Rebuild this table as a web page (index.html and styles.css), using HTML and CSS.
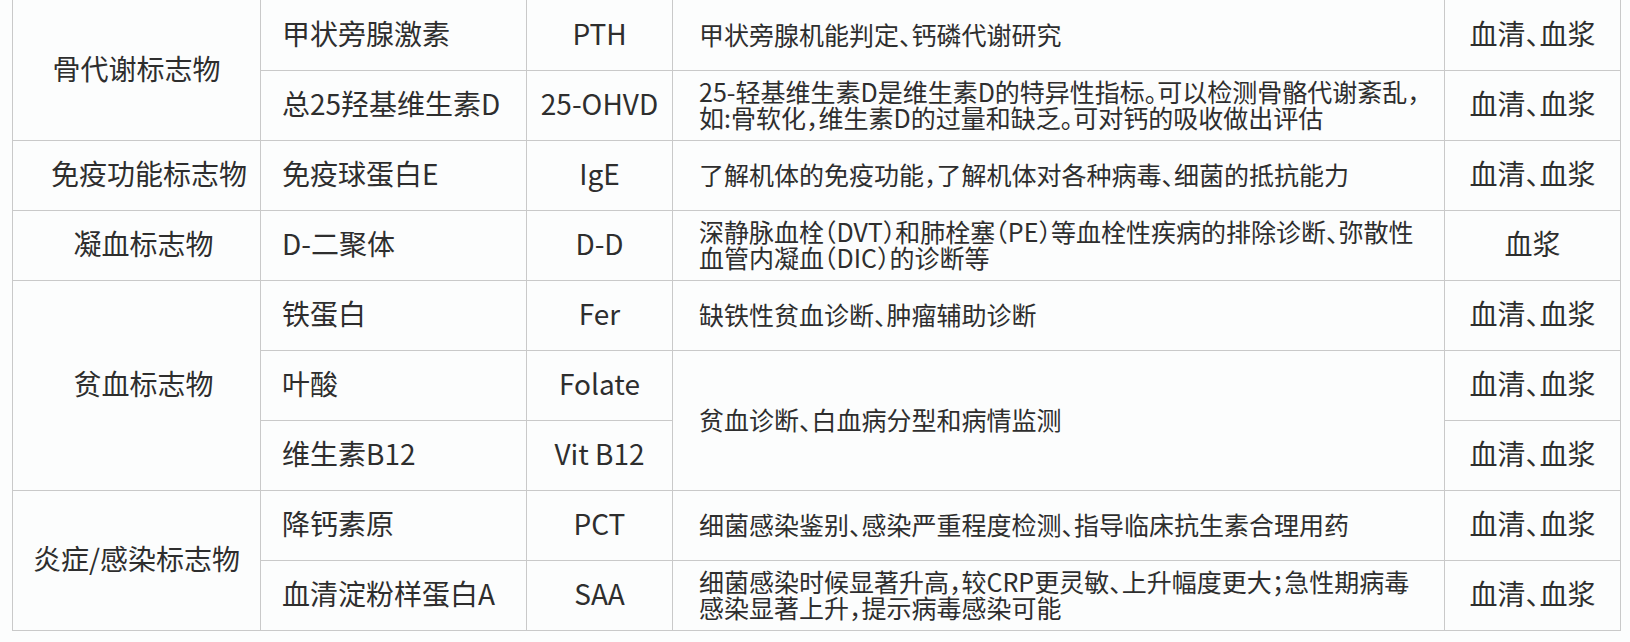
FILE: index.html
```html
<!DOCTYPE html>
<html lang="zh-CN">
<head>
<meta charset="utf-8">
<title>检测项目</title>
<link rel="stylesheet" href="styles.css">
</head>
<body>
<div class="wrap">
<table class="grid">
  <colgroup>
    <col class="c1"><col class="c2"><col class="c3"><col class="c4"><col class="c5">
  </colgroup>
  <tbody>
    <tr class="first">
      <td class="group" rowspan="2">骨代谢标志物</td>
      <td class="name">甲状旁腺激素</td>
      <td class="abbr">PTH</td>
      <td class="desc">甲状旁腺机能判定<span class="hp">、</span>钙磷代谢研究</td>
      <td class="sample">血清<span class="hp">、</span>血浆</td>
    </tr>
    <tr>
      <td class="name">总25羟基维生素D</td>
      <td class="abbr">25-OHVD</td>
      <td class="desc">25-轻基维生素D是维生素D的特异性指标<span class="hp">。</span>可以检测骨骼代谢紊乱<span class="hp">，</span><br>如:骨软化<span class="hp">，</span>维生素D的过量和缺乏<span class="hp">。</span>可对钙的吸收做出评估</td>
      <td class="sample">血清<span class="hp">、</span>血浆</td>
    </tr>
    <tr>
      <td class="group shift-l">免疫功能标志物</td>
      <td class="name">免疫球蛋白E</td>
      <td class="abbr">IgE</td>
      <td class="desc">了解机体的免疫功能<span class="hp">，</span>了解机体对各种病毒<span class="hp">、</span>细菌的抵抗能力</td>
      <td class="sample">血清<span class="hp">、</span>血浆</td>
    </tr>
    <tr>
      <td class="group shift-s">凝血标志物</td>
      <td class="name">D-二聚体</td>
      <td class="abbr">D-D</td>
      <td class="desc">深静脉血栓<span class="po">（</span>DVT<span class="pc">）</span>和肺栓塞<span class="po">（</span>PE<span class="pc">）</span>等血栓性疾病的排除诊断<span class="hp">、</span>弥散性<br>血管内凝血<span class="po">（</span>DIC<span class="pc">）</span>的诊断等</td>
      <td class="sample">血浆</td>
    </tr>
    <tr>
      <td class="group shift-s" rowspan="3">贫血标志物</td>
      <td class="name">铁蛋白</td>
      <td class="abbr">Fer</td>
      <td class="desc">缺铁性贫血诊断<span class="hp">、</span>肿瘤辅助诊断</td>
      <td class="sample">血清<span class="hp">、</span>血浆</td>
    </tr>
    <tr>
      <td class="name">叶酸</td>
      <td class="abbr">Folate</td>
      <td class="desc" rowspan="2">贫血诊断<span class="hp">、</span>白血病分型和病情监测</td>
      <td class="sample">血清<span class="hp">、</span>血浆</td>
    </tr>
    <tr>
      <td class="name">维生素B12</td>
      <td class="abbr">Vit B12</td>
      <td class="sample">血清<span class="hp">、</span>血浆</td>
    </tr>
    <tr>
      <td class="group" rowspan="2">炎症/感染标志物</td>
      <td class="name">降钙素原</td>
      <td class="abbr">PCT</td>
      <td class="desc">细菌感染鉴别<span class="hp">、</span>感染严重程度检测<span class="hp">、</span>指导临床抗生素合理用药</td>
      <td class="sample">血清<span class="hp">、</span>血浆</td>
    </tr>
    <tr>
      <td class="name">血清淀粉样蛋白A</td>
      <td class="abbr">SAA</td>
      <td class="desc">细菌感染时候显著升高<span class="hp">，</span>较CRP更灵敏<span class="hp">、</span>上升幅度更大<span class="hp">；</span>急性期病毒<br>感染显著上升<span class="hp">，</span>提示病毒感染可能</td>
      <td class="sample">血清<span class="hp">、</span>血浆</td>
    </tr>
  </tbody>
</table>
</div>
</body>
</html>
```

FILE: styles.css
```css
html, body {
  margin: 0;
  padding: 0;
  background: #fcfdfd;
}
body {
  font-family: "Noto Sans CJK SC", "Noto Sans", sans-serif;
  color: #2e2e2e;
}
.wrap {
  padding-left: 12px;
}
.grid {
  border-collapse: collapse;
  table-layout: fixed;
  width: 1609px;
}
.c1 { width: 248px; }
.c2 { width: 266px; }
.c3 { width: 146px; }
.c4 { width: 772px; }
.c5 { width: 176px; }
.grid td {
  border: 1px solid #c9c9c9;
  height: 66px;
  padding: 0 0 3px 0;
  vertical-align: middle;
  font-size: 28px;
  line-height: 1.2;
}
.grid tr.first td {
  border-top: none;
  height: 67px;
}
.group { text-align: center; }
.grid td.shift-l { padding-left: 25px; }
.grid td.shift-s { padding-left: 14px; }
.grid td.name { padding-left: 21px; text-align: left; }
.abbr { text-align: center; }
.grid td.desc {
  padding-left: 26px;
  font-size: 25px;
  line-height: 26px;
  text-align: left;
  white-space: nowrap;
}
.sample { text-align: center; }
.hp { font-feature-settings: "halt" 1; }
.po { font-feature-settings: "halt" 1; }
.pc { font-feature-settings: "halt" 1; }
```
